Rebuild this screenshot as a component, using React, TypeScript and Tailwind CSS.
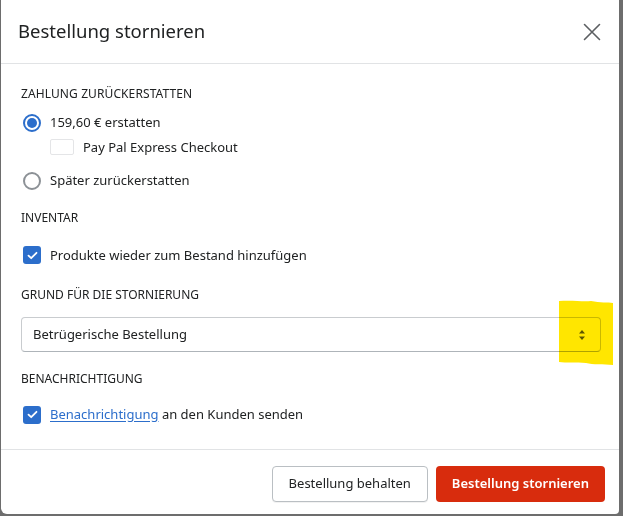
import { useState } from 'react'

function Radio({ checked }: { checked: boolean }) {
  return (
    <span
      className={`flex h-[18px] w-[18px] shrink-0 items-center justify-center rounded-full border-2 ${
        checked ? 'border-[#2c6ecb]' : 'border-[#8c9196]'
      } bg-white`}
    >
      {checked && <span className="h-[10px] w-[10px] rounded-full bg-[#2c6ecb]" />}
    </span>
  )
}

function Checkbox() {
  return (
    <span className="flex h-[18px] w-[18px] shrink-0 items-center justify-center rounded-[3px] bg-[#2c6ecb]">
      <svg width="11" height="9" viewBox="0 0 11 9" fill="none">
        <path d="M1.5 4.6 4.2 7.2 9.5 1.8" stroke="white" strokeWidth="1.8" strokeLinecap="round" strokeLinejoin="round" />
      </svg>
    </span>
  )
}

export default function App() {
  const [refund, setRefund] = useState('now')

  return (
    <div
      className="flex h-[516px] w-[623px] bg-[#6d6d6d] pl-[1px] pr-[4px]"
      style={{ fontFamily: '"Noto Sans", "Open Sans", sans-serif' }}
    >
      <div className="flex h-[514px] flex-1 flex-col overflow-hidden rounded-br-[4px] rounded-bl-[6px] bg-white text-[#202223]">
        {/* header */}
        <div className="flex h-[64px] shrink-0 items-center justify-between border-b border-[#e1e3e5] pl-[17px] pr-[18px]">
          <h1 className="text-[18.5px] font-normal leading-none">Bestellung stornieren</h1>
          <svg width="18" height="18" viewBox="0 0 18 18" className="text-[#5c5f62]">
            <path d="M1.5 1.5 16.5 16.5M16.5 1.5 1.5 16.5" stroke="currentColor" strokeWidth="1.6" strokeLinecap="round" />
          </svg>
        </div>

        {/* body */}
        <div className="flex flex-1 flex-col pl-[20px] pr-[18px] pt-[24px] text-[13px]">
          <div className="text-[12px] uppercase leading-none tracking-[0.1px]">Zahlung zurückerstatten</div>

          <button className="mt-[13px] flex items-center gap-[9px] text-left" onClick={() => setRefund('now')}>
            <span className="ml-[2px]"><Radio checked={refund === 'now'} /></span>
            <span>159,60 € erstatten</span>
          </button>
          <div className="mt-[5px] flex items-center gap-[9px] pl-[29px]">
            <span className="h-[16px] w-[24px] rounded-[2px] border border-[#e4e5e7] bg-white" />
            <span>Pay Pal Express Checkout</span>
          </div>
          <button className="mt-[14px] flex items-center gap-[9px] text-left" onClick={() => setRefund('later')}>
            <span className="ml-[2px]"><Radio checked={refund === 'later'} /></span>
            <span>Später zurückerstatten</span>
          </button>

          <div className="mt-[21px] text-[12px] uppercase leading-none">Inventar</div>
          <label className="mt-[22px] flex items-center gap-[9px]">
            <span className="ml-[2px]"><Checkbox /></span>
            <span>Produkte wieder zum Bestand hinzufügen</span>
          </label>

          <div className="mt-[24px] text-[12px] uppercase leading-none">Grund für die Stornierung</div>
          <div className="relative mt-[16px]">
            <div className="flex h-[35px] items-center justify-between rounded-[4px] border border-[#c9cccf] border-b-[#aeb4b9] pl-[11px] pr-[14px]">
              <span>Betrügerische Bestellung</span>
              <svg width="8" height="12" viewBox="0 0 8 12" className="text-[#5c5f62]">
                <path d="M4 1 7 4.5H1Z M4 11 1 7.5H7Z" fill="currentColor" />
              </svg>
            </div>
            {/* marker highlight */}
            <svg className="pointer-events-none absolute left-[537px] top-[-17px] mix-blend-multiply" width="56" height="66" viewBox="0 0 56 66">
              <path d="M1 1 C15 0 25 2 33 1 C42 3 50 2 55 3 L55 65 C45 64 35 65 28 63 C18 62 8 63 1 62 Z" fill="#ffe600" />
            </svg>
          </div>

          <div className="mt-[21px] text-[12px] uppercase leading-none">Benachrichtigung</div>
          <label className="mt-[20px] flex items-center gap-[9px]">
            <span className="ml-[2px]"><Checkbox /></span>
            <span>
              <a className="text-[#2c6ecb] underline underline-offset-[2px]">Benachrichtigung</a> an den Kunden senden
            </span>
          </label>
        </div>

        {/* footer */}
        <div className="flex h-[65px] shrink-0 items-start justify-end gap-[8px] border-t border-[#e1e3e5] pr-[14px] pt-[16px]">
          <button className="h-[36px] rounded-[4px] border border-[#babfc3] bg-white px-[16px] text-[13px] text-[#202223] shadow-[0_1px_0_rgba(0,0,0,0.05)]">
            Bestellung behalten
          </button>
          <button className="h-[36px] rounded-[4px] bg-[#d82c0d] px-[16px] text-[13px] font-semibold text-white">
            Bestellung stornieren
          </button>
        </div>
      </div>
    </div>
  )
}
